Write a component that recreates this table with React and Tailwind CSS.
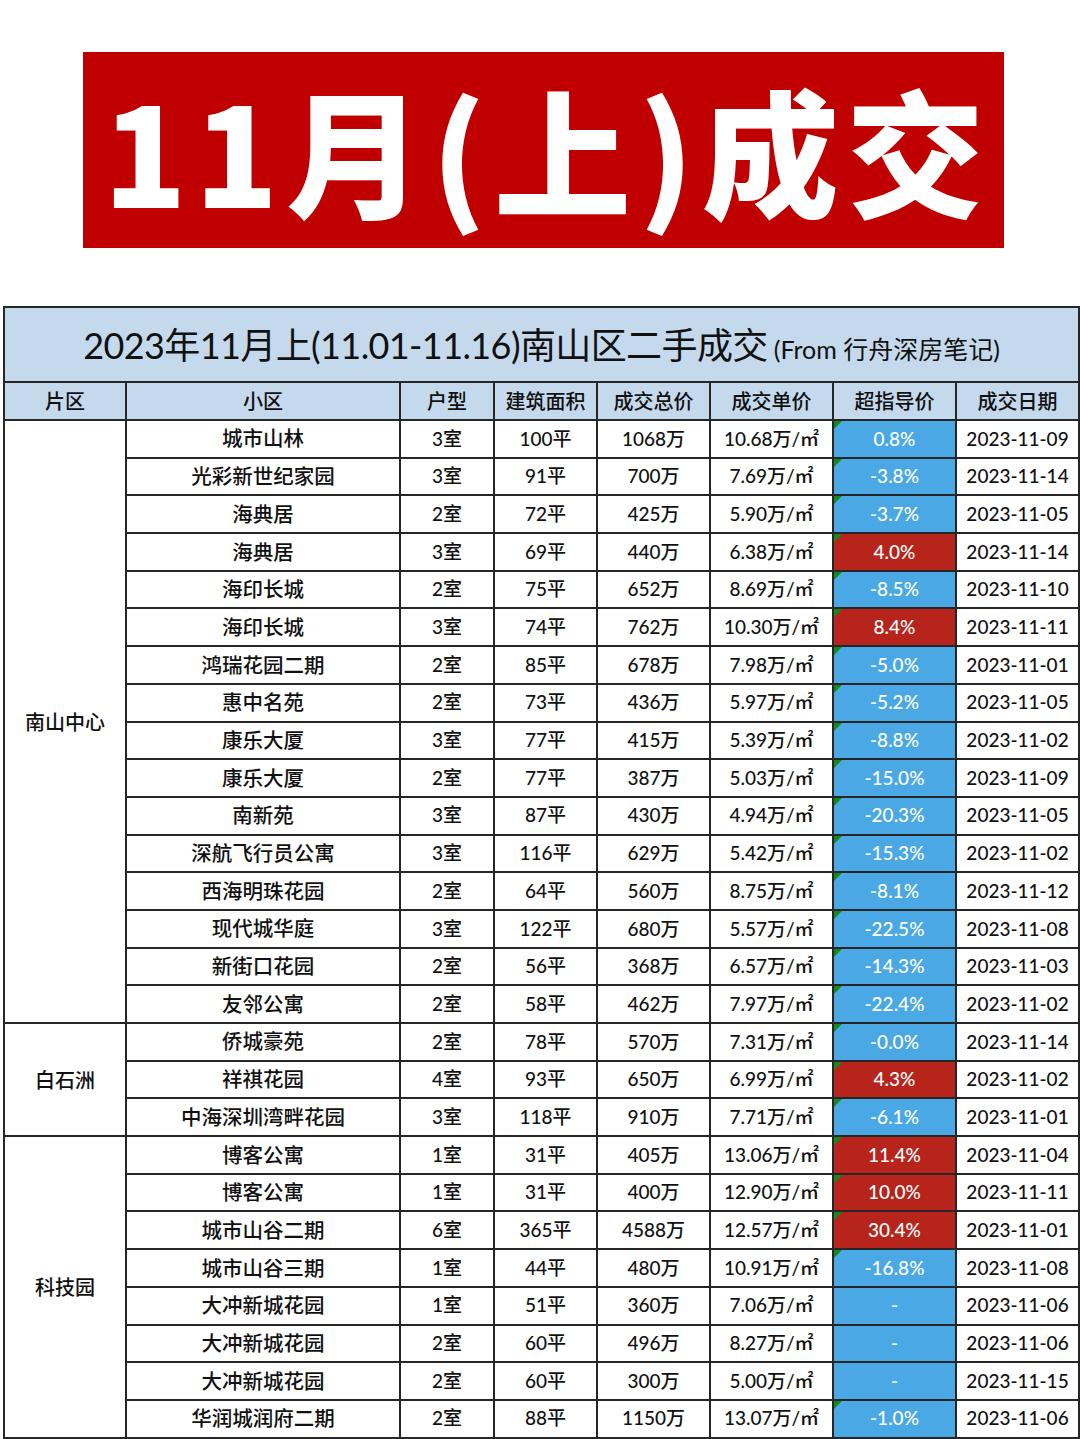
import React from "react"

const font = { fontFamily: "Lato, 'Noto Sans CJK SC', sans-serif" }

const groups = [
  {
    area: "南山中心",
    rows: [
      ["城市山林", "3室", "100平", "1068万", "10.68万/㎡", "0.8%", "b", "2023-11-09"],
      ["光彩新世纪家园", "3室", "91平", "700万", "7.69万/㎡", "-3.8%", "b", "2023-11-14"],
      ["海典居", "2室", "72平", "425万", "5.90万/㎡", "-3.7%", "b", "2023-11-05"],
      ["海典居", "3室", "69平", "440万", "6.38万/㎡", "4.0%", "r", "2023-11-14"],
      ["海印长城", "2室", "75平", "652万", "8.69万/㎡", "-8.5%", "b", "2023-11-10"],
      ["海印长城", "3室", "74平", "762万", "10.30万/㎡", "8.4%", "r", "2023-11-11"],
      ["鸿瑞花园二期", "2室", "85平", "678万", "7.98万/㎡", "-5.0%", "b", "2023-11-01"],
      ["惠中名苑", "2室", "73平", "436万", "5.97万/㎡", "-5.2%", "b", "2023-11-05"],
      ["康乐大厦", "3室", "77平", "415万", "5.39万/㎡", "-8.8%", "b", "2023-11-02"],
      ["康乐大厦", "2室", "77平", "387万", "5.03万/㎡", "-15.0%", "b", "2023-11-09"],
      ["南新苑", "3室", "87平", "430万", "4.94万/㎡", "-20.3%", "b", "2023-11-05"],
      ["深航飞行员公寓", "3室", "116平", "629万", "5.42万/㎡", "-15.3%", "b", "2023-11-02"],
      ["西海明珠花园", "2室", "64平", "560万", "8.75万/㎡", "-8.1%", "b", "2023-11-12"],
      ["现代城华庭", "3室", "122平", "680万", "5.57万/㎡", "-22.5%", "b", "2023-11-08"],
      ["新街口花园", "2室", "56平", "368万", "6.57万/㎡", "-14.3%", "b", "2023-11-03"],
      ["友邻公寓", "2室", "58平", "462万", "7.97万/㎡", "-22.4%", "b", "2023-11-02"],
    ],
  },
  {
    area: "白石洲",
    rows: [
      ["侨城豪苑", "2室", "78平", "570万", "7.31万/㎡", "-0.0%", "b", "2023-11-14"],
      ["祥祺花园", "4室", "93平", "650万", "6.99万/㎡", "4.3%", "r", "2023-11-02"],
      ["中海深圳湾畔花园", "3室", "118平", "910万", "7.71万/㎡", "-6.1%", "b", "2023-11-01"],
    ],
  },
  {
    area: "科技园",
    rows: [
      ["博客公寓", "1室", "31平", "405万", "13.06万/㎡", "11.4%", "r", "2023-11-04"],
      ["博客公寓", "1室", "31平", "400万", "12.90万/㎡", "10.0%", "r", "2023-11-11"],
      ["城市山谷二期", "6室", "365平", "4588万", "12.57万/㎡", "30.4%", "r", "2023-11-01"],
      ["城市山谷三期", "1室", "44平", "480万", "10.91万/㎡", "-16.8%", "b", "2023-11-08"],
      ["大冲新城花园", "1室", "51平", "360万", "7.06万/㎡", "-", "b", "2023-11-06"],
      ["大冲新城花园", "2室", "60平", "496万", "8.27万/㎡", "-", "b", "2023-11-06"],
      ["大冲新城花园", "2室", "60平", "300万", "5.00万/㎡", "-", "b", "2023-11-15"],
      ["华润城润府二期", "2室", "88平", "1150万", "13.07万/㎡", "-1.0%", "b", "2023-11-06"],
    ],
  },
]

const headers = ["片区", "小区", "户型", "建筑面积", "成交总价", "成交单价", "超指导价", "成交日期"]
const widths = ["w-[122px]", "w-[274px]", "w-[94px]", "w-[103px]", "w-[113px]", "w-[123px]", "w-[123px]", "w-[123px]"]

const td = "border-2 border-[#262626] text-center p-0"

export default function App() {
  return (
    <div className="w-[1080px] h-[1439px] bg-white overflow-hidden" style={font}>
      <div className="pt-[52px] pl-[83px]">
        <div className="w-[921px] h-[196px] bg-[#c00000] flex items-center justify-center">
          <h1
            className="text-white font-black text-[137px] leading-none tracking-[8px] pl-[8px] -mt-[4px]"
            style={{ fontFamily: "'Noto Sans CJK SC', sans-serif" }}
          >
            11月(上)成交
          </h1>
        </div>
      </div>

      <div className="pt-[58px] pl-[3px]">
        <table className="w-[1075px] border-collapse table-fixed text-[19px] font-medium text-[#111]">
          <colgroup>
            {widths.map((w, i) => (
              <col key={i} className={w} />
            ))}
          </colgroup>
          <tbody>
            <tr className="h-[75px] bg-[#c5d9ed]">
              <td colSpan={8} className={`${td} font-normal`}>
                <span className="text-[36px] tracking-[-0.6px]">2023年11月上(11.01-11.16)南山区二手成交</span>
                <span className="text-[25px] ml-[6px]">(From 行舟深房笔记)</span>
              </td>
            </tr>
            <tr className="h-[38px] bg-[#c5d9ed]">
              {headers.map((h) => (
                <td key={h} className={`${td} text-[20px]`}>
                  {h}
                </td>
              ))}
            </tr>
            {groups.map((g) =>
              g.rows.map((r, i) => (
                <tr key={g.area + i} className="h-[37.7px]">
                  {i === 0 && (
                    <td rowSpan={g.rows.length} className={`${td} text-[20px]`}>
                      {g.area}
                    </td>
                  )}
                  <td className={`${td} text-[20.5px]`}>{r[0]}</td>
                  <td className={td}>{r[1]}</td>
                  <td className={td}>{r[2]}</td>
                  <td className={td}>{r[3]}</td>
                  <td className={td}>{r[4]}</td>
                  <td className={`${td} relative text-white ${r[6] === "r" ? "bg-[#b7241b]" : "bg-[#4aa8e4]"}`}>
                    {r[5] !== "-" && (
                      <span className="absolute top-0 left-0 w-0 h-0 border-t-[8px] border-t-[#138a1e] border-r-[8px] border-r-transparent" />
                    )}
                    {r[5]}
                  </td>
                  <td className={td}>{r[7]}</td>
                </tr>
              ))
            )}
          </tbody>
        </table>
      </div>
    </div>
  )
}
